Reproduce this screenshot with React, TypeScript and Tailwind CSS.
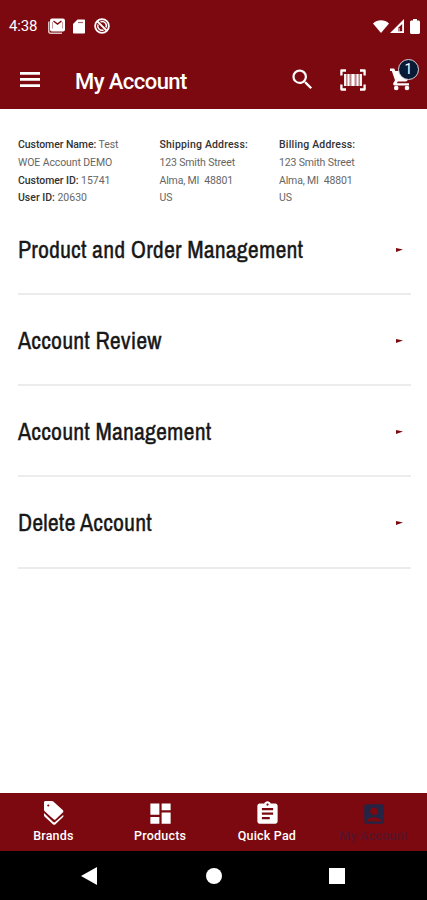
import React from "react";
import {
    MdAccountBox,
    MdAssignment,
    MdDashboard,
    MdSearch,
} from "react-icons/md";

const sections = [
    "Product and Order Management",
    "Account Review",
    "Account Management",
    "Delete Account",
];

const address = ["123 Smith Street", "Alma, MI\u00a0 48801", "US"];

const TagsIcon = () => (
    <svg viewBox="0 0 22 26" className="h-[26px] w-[22px] fill-white">
        <path
            fillRule="evenodd"
            d="M2.6 1h6.2c.6 0 1.1.2 1.5.6l9.4 8.3c.9.8.9 1.800.1 2.600l-7.100 6.700c-.8.7-1.700.7-2.500-.1L1.700 11.300c-.5-.4-.7-.9-.7-1.500V2.600C1 1.600 1.600 1 2.600 1Zm2.700 3.400a1.100 1.100 0 1 0 0 2.200 1.100 1.100 0 0 0 0-2.200Z"
        />
        <path d="M1 13v2.300c0 .6.300 1 .7 1.400l8.200 7.500c.9.8 1.800.8 2.600.1l7.300-7.100c.7-.7.8-1.500.4-2.300l-8.100 7.200c-.6.5-1.300.5-1.900 0L1 13Z" />
    </svg>
);

const MenuIcon = () => (
    <svg viewBox="0 0 20 15" className="h-[15px] w-5 fill-white">
        <path d="M0 0h20v2.700H0ZM0 6.100h20v2.700H0ZM0 12.200h20v2.700H0Z" />
    </svg>
);

const BarcodeIcon = () => (
    <svg viewBox="0 0 26 22" className="h-[22px] w-[26px]" fill="none" stroke="white">
        <path strokeWidth="2.300" strokeLinejoin="round" d="M1.400 6.500v-5H6M20 1.500h4.600v5M1.400 15.500v5H6M20 20.500h4.600v-5" />
        <path strokeWidth="1.800" d="M5 5v12M8.500 5v12M17.500 5v12M21 5v12" />
        <path strokeWidth="3" d="M13 5v12" />
        <path strokeWidth="12" strokeOpacity=".5" d="M4.500 11h17" />
    </svg>
);

const CartIcon = () => (
    <svg viewBox="0 0 22 23" className="h-[23px] w-[22px] fill-white">
        <path d="M0 .5h4.200L5.300 3H19v7l-1.800 2.700c-.4.600-.9.800-1.500.8H7.800l-1 1.800H19v2.200H5c-1.600 0-2.300-1.300-1.600-2.500L5 12.300 1.800 3H0Z" />
        <circle cx="6.200" cy="20" r="2.300" />
        <circle cx="17" cy="20" r="2.300" />
    </svg>
);

const StatusBar = () => (
    <div className="flex h-[52px] items-center justify-between pr-[7px] pl-[9px]">
        <div className="flex items-center">
            <span className="w-[39px] pt-px text-[15px] tracking-[-0.2px]">4:38</span>
            <svg viewBox="0 0 17 16" className="h-4 w-[17px]">
                <path fill="white" opacity=".75" d="M0 4v9.500C0 15 1 16 2.500 16H14v-1.500H3C2 14.500 1.500 14 1.500 13V3Z" />
                <rect x="2" y="0.500" width="15" height="13" rx="2" fill="white" />
                <path d="M4.500 10.500V4M14.500 10.500V4" fill="none" stroke="#c79a9c" />
                <path d="m5.500 3 4 3 4-3" fill="none" stroke="#7b090f" strokeWidth="1.400" />
            </svg>
            <svg viewBox="0 0 12 15" className="ml-2 h-[15px] w-3">
                <path fill="white" d="M4.500.500H11c.6 0 1 .4 1 1v12c0 .6-.4 1-1 1H1c-.6 0-1-.4-1-1V5Z" />
                <path stroke="#a5696c" strokeWidth="1.200" d="M5 3.500h5" />
            </svg>
            <svg viewBox="0 0 16 16" className="ml-[9px] size-4" fill="none" stroke="white">
                <circle cx="8" cy="8" r="6.900" strokeWidth="1.800" />
                <path strokeWidth="1.800" d="m3.500 3.500 9 9" />
                <path strokeWidth="1.500" d="M6.500 3.800A4.300 4.300 0 0 1 12 9.500M4 6.500a4.300 4.300 0 0 0 5.500 5.500" />
            </svg>
        </div>
        <div className="flex items-center fill-white">
            <svg viewBox="0 0 16 13" className="h-[13px] w-4">
                <path d="M8 13 0 3.500C4.500-.800 11.500-.800 16 3.500Z" />
            </svg>
            <svg viewBox="0 0 14 14" className="ml-px h-3.5 w-3.5">
                <path fillRule="evenodd" d="M14 0v14H0Zm-1.800 5v7.200H8V9Z" />
                <path opacity=".5" d="M8 9h2v3.200H8Z" />
            </svg>
            <svg viewBox="0 0 10 15" className="ml-[6px] h-[15px] w-[10px]">
                <path d="M3 0h4v1.500h1.500c.8 0 1.500.7 1.500 1.500v10.500c0 .8-.7 1.500-1.500 1.500h-7C.700 15 0 14.300 0 13.500V3c0-.8.700-1.500 1.500-1.500H3Z" />
            </svg>
        </div>
    </div>
);

const Toolbar = () => (
    <div className="flex h-[55px] items-center pr-[15px] pl-5">
        <MenuIcon />
        <h1 className="ml-[35px] flex-1 pt-[3px] text-[22px] font-medium tracking-[-0.55px] whitespace-nowrap">My Account</h1>
        <MdSearch className="mr-[24px] size-[27px]" />
        <BarcodeIcon />
        <div className="relative ml-[24px]">
            <CartIcon />
            <span className="absolute -top-[9px] left-[8px] flex size-[21px] items-center justify-center rounded-full border-[1.5px] border-[#d9d5d8] bg-[#071a36] text-[14px]">
                1
            </span>
        </div>
    </div>
);

const AccountDetails = () => (
    <div className="flex h-[68px] text-[10.5px] leading-[17.8px] text-[#666]">
        <div className="w-[141.5px] whitespace-nowrap">
            <p className="tracking-[-0.07px]"><b className="font-medium text-[#333]">Customer Name:</b> Test</p>
            <p className="tracking-[-0.11px]">WOE Account DEMO</p>
            <p className="tracking-[-0.05px]"><b className="font-medium text-[#333]">Customer ID:</b> 15741</p>
            <p><b className="font-medium text-[#333]">User ID:</b> 20630</p>
        </div>
        {["Shipping", "Billing"].map((kind) => (
            <div key={kind} className="w-[119.5px] tracking-[-0.15px] whitespace-nowrap">
                <p className="font-medium tracking-[0.18px] text-[#333]">{kind} Address:</p>
                {address.map((line) => (
                    <p key={line}>{line}</p>
                ))}
            </div>
        ))}
    </div>
);

const BottomNav = () => (
    <nav className="grid h-[58px] grid-cols-4 bg-[#7b090f] text-[12.5px] font-medium text-white">
        <div className="flex flex-col items-center">
            <div className="flex h-[34px] items-end pb-px pl-px"><TagsIcon /></div>
            <span className="leading-[18px] tracking-[0.2px]">Brands</span>
        </div>
        <div className="flex flex-col items-center">
            <div className="flex h-[34px] items-end"><MdDashboard className="size-[27px]" /></div>
            <span className="leading-[18px] tracking-[0.2px]">Products</span>
        </div>
        <div className="flex flex-col items-center">
            <div className="flex h-[34px] items-end pl-px"><MdAssignment className="size-[27px]" /></div>
            <span className="leading-[18px] tracking-[0.2px]">Quick Pad</span>
        </div>
        <div className="flex flex-col items-center text-[#242445]">
            <div className="flex h-[34px] items-end pl-px"><MdAccountBox className="size-[26px]" /></div>
            <span className="leading-[18px] tracking-[0.2px] text-[#58142a]">My Account</span>
        </div>
    </nav>
);

const App = () => {
    return (
        <div className="flex h-[900px] w-[427px] flex-col overflow-hidden bg-white font-['Roboto',sans-serif]">
            <header className="h-[109px] bg-[#7b090f] text-white">
                <StatusBar />
                <Toolbar />
            </header>
            <main className="flex-1 pt-[27px] pr-4 pl-[18px]">
                <AccountDetails />
                {sections.map((title) => (
                    <div key={title} className="flex h-[91.15px] items-center justify-between border-b-2 border-[#ececec] pr-2">
                        <h2 className="font-['Liberation_Sans_Narrow','Archivo_Narrow',sans-serif] text-[24px] tracking-[0.1px] whitespace-nowrap text-[#181818] [-webkit-text-stroke:0.3px_#181818]">
                            {title}
                        </h2>
                        <svg viewBox="0 0 7 4" className="mt-[2px] h-1 w-[7px]">
                            <path fill="#7b090f" d="M0 0 7 1.500 0 4Z" />
                        </svg>
                    </div>
                ))}
            </main>
            <BottomNav />
            <footer className="flex h-[49px] items-center justify-between bg-black pr-[82px] pl-[81px]">
                <svg viewBox="0 0 16 18" className="h-[18px] w-4 fill-white">
                    <path d="M16 0v18L0 9Z" />
                </svg>
                <span className="ml-px size-4 rounded-full bg-white" />
                <span className="size-4 bg-white" />
            </footer>
        </div>
    );
};

export default App;
